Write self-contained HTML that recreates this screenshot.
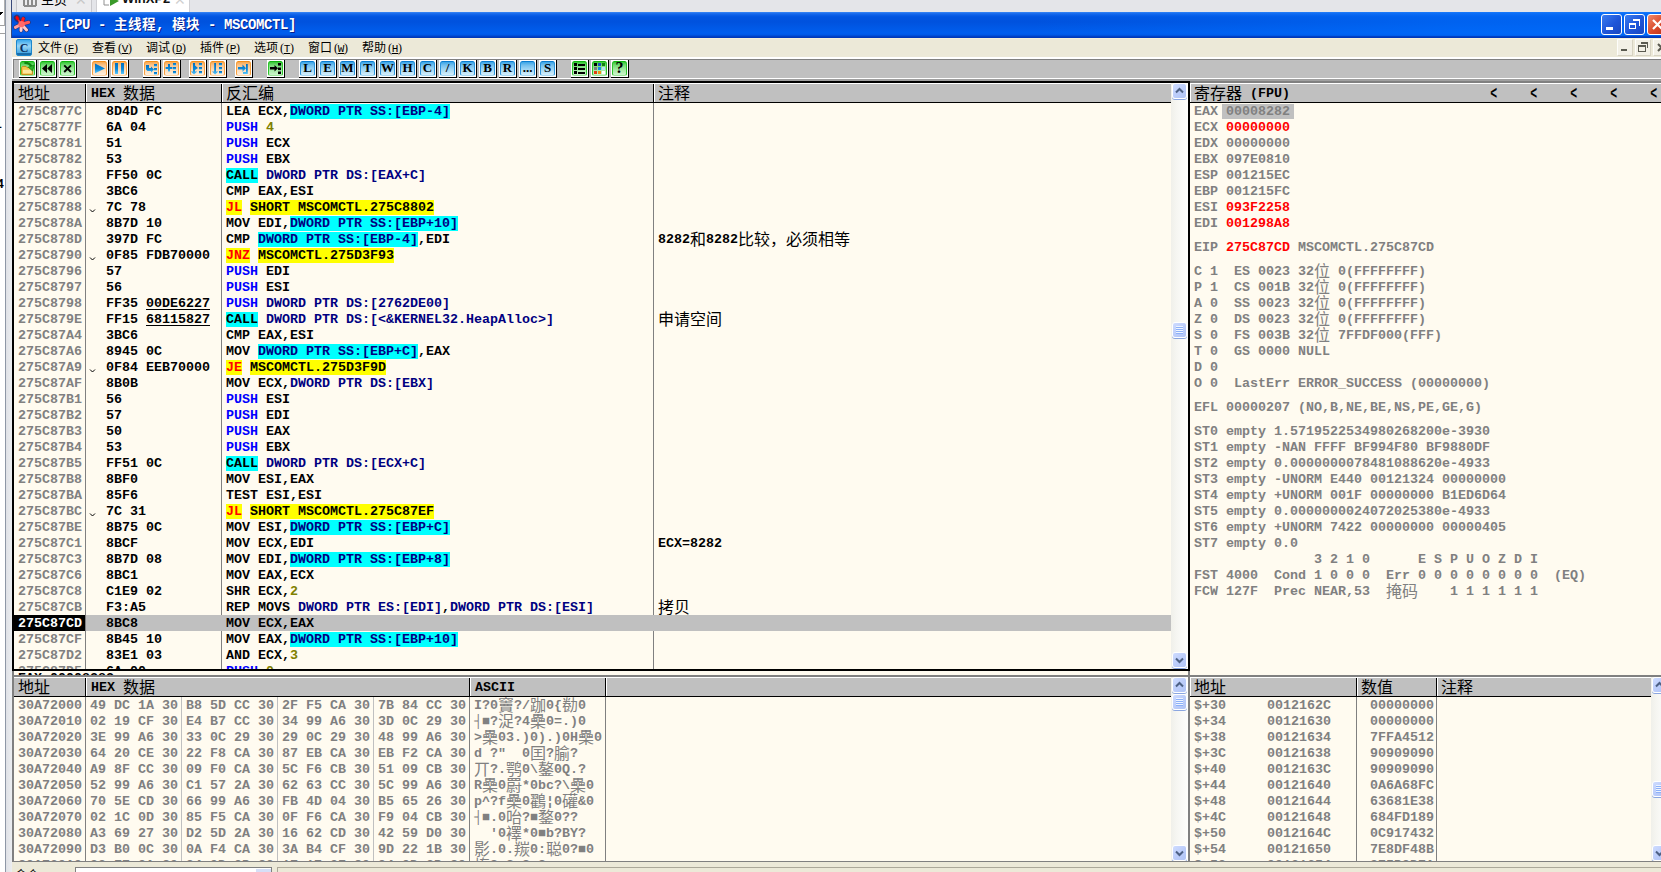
<!DOCTYPE html>
<html lang="zh"><head><meta charset="utf-8"><title>OllyDbg - CPU</title>
<style>
*{box-sizing:border-box;margin:0;padding:0}
html,body{width:1661px;height:872px;overflow:hidden;background:#ece9d8}
body{position:relative;font-family:"Liberation Sans","Noto Sans CJK SC",sans-serif}
.a{position:absolute}
.m{font:bold 13.333px/16px "Liberation Mono","Noto Sans CJK SC",monospace;white-space:pre;height:16px;letter-spacing:0}
.cj{font-family:"Noto Sans CJK SC",sans-serif;font-weight:400;font-size:16px;letter-spacing:0;line-height:0;position:relative;top:2px}
.g{color:#808080}
.r{color:#ff0000}
.bl{color:#0000ff}
.nv{color:#000080}
.ol{color:#808000}
.cy{background:#00ffff;color:#000080}
.cc{background:#00ffff;color:#000}
.yj{background:#ffff00;color:#ff0000}
.yy{background:#ffff00;color:#000}
.u{text-decoration:underline;text-underline-offset:2px}
.pane{background:#fffbf0;overflow:hidden}
.hd{background:#c0c0c0;height:19px;border-top:1px solid #fff}
.hc{position:absolute;top:0;height:18px;border-left:1px solid #000;box-shadow:inset 1px 0 0 #fff}
.ht{position:absolute;top:2px;left:5px;font:bold 13.333px/16px "Liberation Mono",monospace;white-space:pre}

.vl{position:absolute;width:1px;background:#808080}
.vl2{position:absolute;width:1px;background:#c0c0c0}
.sb{position:absolute;width:17px;background:linear-gradient(to right,#f0f0ea 0,#f6f6f2 35%,#fefefc 100%)}
.sbb{position:absolute;left:1px;width:15px;height:16px;border:1px solid #fff;border-radius:3px;background:linear-gradient(135deg,#cfdcff 0,#bccdfa 50%,#b0c4f6 100%);box-shadow:0 1px 0 #8ba6e0}
.tb{position:absolute;top:60px;width:18px;height:18px;background:#fff;border-right:1px solid #000;border-bottom:1px solid #000}
.ti{position:absolute;left:1px;top:1px;width:15px;height:15px;border-radius:2.5px}
.ti{border:1px solid}
.tg{background:linear-gradient(#34c634 0,#74dc74 25%,#a4eaa4 60%,#ccf5cc 100%);border-color:#10b410 #2cc42c #9ce69c #2cc42c}
.to{background:linear-gradient(#f8a850 0,#fbc48c 25%,#fcdcb8 60%,#fef0e0 100%);border-color:#f48e1c #f6a040 #fbd4a8 #f6a040}
.tc{background:linear-gradient(#3aa4e6 0,#74c0ee 25%,#a4d8f4 60%,#d4eefb 100%);border-color:#0a7cd0 #2a94dc #a8d8f2 #2a94dc}
.tl{position:absolute;left:0;top:0;width:15px;height:15px;text-align:center;font:bold 13px/13px "Liberation Serif",serif;color:#000}
.mi{position:absolute;top:40px;height:14px;font:12px/14px "Noto Sans CJK SC",sans-serif;color:#000;white-space:pre}
.mi i{font:normal 12px/14px "Liberation Serif",serif;display:inline-block;width:6px;text-align:center}
</style></head>
<body>
<div class="a" style="left:0;top:0;width:1661px;height:12px;background:#e4e5e9"></div>
<div class="a" style="left:0;top:0;width:5px;height:872px;background:#fff"></div>
<div class="a" style="left:5px;top:0;width:1px;height:872px;background:#8e97a6"></div>
<div class="a" style="left:6px;top:0;width:6px;height:872px;background:linear-gradient(to right,#dfe1e6,#eceef1)"></div>
<div class="a" style="left:0;top:0;width:5px;height:26px;border-bottom:1px solid #a0a0a0;border-right:1px solid #b0b0b0"></div>
<div class="a" style="left:0;top:33px;width:5px;height:1px;background:#a0a0a0"></div>
<div class="a" style="left:0;top:12px;width:3px;height:1px;background:#000"></div><div class="a" style="left:0;top:13px;width:2px;height:1px;background:#000"></div><div class="a" style="left:0;top:14px;width:1px;height:1px;background:#000"></div>
<div class="a" style="left:-5px;top:118px;font:bold 12px/12px 'Liberation Sans',sans-serif;color:#000">1</div>
<div class="a" style="left:-3px;top:178px;font:bold 12px/12px 'Liberation Sans',sans-serif;color:#000">4</div>
<div class="a" style="left:16px;top:0;width:76px;height:12px;background:#ececee;border-left:1px solid #c8c8cc;border-right:1px solid #c8c8cc;overflow:hidden"><svg class="a" style="left:6px;top:-5px" width="14" height="12" viewBox="0 0 14 12"><path d="M1 11V2h4v9M9 11V2h4v9M1 11h12" fill="none" stroke="#8a8a8a" stroke-width="2"/></svg><span class="a" style="left:24px;top:-9px;font:400 13px/16px 'Noto Sans CJK SC',sans-serif;color:#000">主页</span><span class="a" style="left:58px;top:-8px;font:14px/16px 'Liberation Sans',sans-serif;color:#c8c8c8">&#10005;</span></div>
<div class="a" style="left:96px;top:0;width:94px;height:12px;background:#fff;border-left:1px solid #d0d0d4;border-right:1px solid #d0d0d4;overflow:hidden"><svg class="a" style="left:6px;top:-6px" width="18" height="14" viewBox="0 0 18 14"><path d="M1 4v7h5" fill="none" stroke="#909090" stroke-width="1"/><path d="M7 2l9 5-9 5z" fill="#3a9a2a"/></svg><span class="a" style="left:25px;top:-9px;font:bold 13px/16px 'Liberation Sans',sans-serif;color:#111">WinXP2</span><span class="a" style="left:77px;top:-8px;font:14px/16px 'Liberation Sans',sans-serif;color:#d0d0d0">&#10005;</span></div>
<div class="a" style="left:12px;top:12px;width:1649px;height:26px;background:linear-gradient(to bottom,#3d8cf6 0,#2272ee 1px,#0a5fe8 3px,#0054e0 5px,#0052de 10px,#0059e7 16px,#005eee 21px,#0058e6 23px,#0046cc 24px,#0034b4 26px)"></div>
<div class="a" style="left:12px;top:12px;width:1649px;height:24px;background:linear-gradient(to right,rgba(0,110,255,0) 0,rgba(0,110,255,0) 62%,rgba(0,112,255,.55) 88%,rgba(0,112,255,.6) 100%)"></div>
<div class="a" style="left:11px;top:0;width:1px;height:38px;background:#3a4a7a"></div>
<svg class="a" style="left:13px;top:14px" width="19" height="20" viewBox="13 14 19 20"><defs><linearGradient id="sp" x1="0" y1="0" x2="0" y2="1"><stop offset="0" stop-color="#ff0000"/><stop offset=".3" stop-color="#ff3030"/><stop offset=".6" stop-color="#ff8080"/><stop offset="1" stop-color="#fff0f0"/></linearGradient></defs><g fill="none" stroke="#5a1010" stroke-linecap="round" stroke-width="4.2" opacity=".55"><path d="M21.4 24.2L23.3 18.6M21.4 24.2L28.6 22.3M21.4 24.2L15.4 27.4M21.4 24.2L21 30.4M21.4 24.2L26.6 30M21.4 24.2L18.4 20"/><ellipse cx="17.2" cy="18.2" rx="1" ry="1.6" transform="rotate(-35 17.2 18.2)"/></g><g fill="none" stroke="url(#sp)" stroke-linecap="round" stroke-width="3" gradientUnits="userSpaceOnUse"><path d="M21.4 24.2L23.3 18.6" stroke="#ff1818"/><path d="M21.4 24.2L28.6 22.3" stroke="#ff5a5a"/><path d="M21.4 24.2L15.4 27.4" stroke="#ffa0a0"/><path d="M21.4 24.2L21 30.4" stroke="#ffd0d0"/><path d="M21.4 24.2L26.6 30" stroke="#ffc8c8"/><path d="M21.4 24.2L18.4 20" stroke="#ff3030" stroke-width="1.6"/></g><ellipse cx="17.2" cy="18.2" rx="1.5" ry="2.2" transform="rotate(-35 17.2 18.2)" fill="#ff0000"/><circle cx="21.4" cy="24.2" r="3.1" fill="#ff6a6a"/></svg>
<div class="a" style="left:42px;top:14px;height:18px;white-space:pre;color:#fff;font:bold 14px/18px 'Liberation Mono',monospace;letter-spacing:-0.4px;text-shadow:1px 1px 0 #0a1f8a">- [CPU - <span style="font:bold 13.5px/18px 'Noto Sans CJK SC',sans-serif;letter-spacing:0.5px">主线程</span>, <span style="font:bold 13.5px/18px 'Noto Sans CJK SC',sans-serif;letter-spacing:0.5px">模块</span> - MSCOMCTL]</div>
<div class="a" style="left:1601px;top:14px;width:21px;height:21px;border:1px solid #fff;border-radius:3px;background:linear-gradient(135deg,#3a7cf0 0,#1e55d8 55%,#1a48c0 100%)"><div class="a" style="left:4px;top:12px;width:7px;height:3px;background:#fff"></div></div>
<div class="a" style="left:1624px;top:14px;width:21px;height:21px;border:1px solid #fff;border-radius:3px;background:linear-gradient(135deg,#3a7cf0 0,#1e55d8 55%,#1a48c0 100%)"><div class="a" style="left:8px;top:4px;width:7px;height:7px;border-right:1px solid #fff;border-top:2px solid #fff"></div><div class="a" style="left:4px;top:8px;width:7px;height:6px;border:1px solid #fff;border-top:2px solid #fff"></div></div>
<div class="a" style="left:1647px;top:14px;width:21px;height:21px;border:1px solid #fff;border-radius:3px;background:linear-gradient(135deg,#f08a6a 0,#d8482a 55%,#b83018 100%)"><svg class="a" style="left:3px;top:3px" width="13" height="13" viewBox="0 0 13 13"><path d="M2 2l9 9M11 2l-9 9" stroke="#fff" stroke-width="2.2"/></svg></div>
<div class="a" style="left:12px;top:38px;width:1649px;height:19px;background:#ece9d8;border-top:1px solid #f5f0d8"></div>
<div class="a" style="left:12px;top:57px;width:1649px;height:2px;background:#fff"></div>
<div class="a" style="left:12px;top:59px;width:1649px;height:1px;background:#808080"></div>
<div class="a" style="left:16px;top:39px;width:16px;height:17px;border-radius:2px;background:linear-gradient(#3aa8ec 0,#9ad6f6 40%,#4aaae4 85%,#1a6ca8 86%,#1a6ca8 100%);border:1px solid #1c86cc"><span class="a" style="left:0;top:1px;width:14px;text-align:center;font:bold 12px/14px 'Liberation Serif',serif;color:#0c2c5c">C</span></div>
<div class="mi" style="left:38px">文件<i style="text-align:right">(</i><i style="font:normal 11px/14px 'Liberation Mono',monospace;text-indent:-0.3px"><u>F</u></i><i style="text-align:left">)</i></div>
<div class="mi" style="left:92px">查看<i style="text-align:right">(</i><i style="font:normal 11px/14px 'Liberation Mono',monospace;text-indent:-0.3px"><u>V</u></i><i style="text-align:left">)</i></div>
<div class="mi" style="left:146px">调试<i style="text-align:right">(</i><i style="font:normal 11px/14px 'Liberation Mono',monospace;text-indent:-0.3px"><u>D</u></i><i style="text-align:left">)</i></div>
<div class="mi" style="left:200px">插件<i style="text-align:right">(</i><i style="font:normal 11px/14px 'Liberation Mono',monospace;text-indent:-0.3px"><u>P</u></i><i style="text-align:left">)</i></div>
<div class="mi" style="left:254px">选项<i style="text-align:right">(</i><i style="font:normal 11px/14px 'Liberation Mono',monospace;text-indent:-0.3px"><u>T</u></i><i style="text-align:left">)</i></div>
<div class="mi" style="left:308px">窗口<i style="text-align:right">(</i><i style="font:normal 11px/14px 'Liberation Mono',monospace;text-indent:-0.3px"><u>W</u></i><i style="text-align:left">)</i></div>
<div class="mi" style="left:362px">帮助<i style="text-align:right">(</i><i style="font:normal 11px/14px 'Liberation Mono',monospace;text-indent:-0.3px"><u>H</u></i><i style="text-align:left">)</i></div>
<div class="a" style="left:1617px;top:39px;width:16px;height:17px;background:#f2f0e6;border:1px solid #fdfdfa;border-right-color:#d6d2c2;border-bottom-color:#d6d2c2"><div class="a" style="left:3px;top:9px;width:6px;height:2px;background:#5a5a50"></div></div>
<div class="a" style="left:1635px;top:39px;width:16px;height:17px;background:#f2f0e6;border:1px solid #fdfdfa;border-right-color:#d6d2c2;border-bottom-color:#d6d2c2"><div class="a" style="left:5px;top:2px;width:7px;height:6px;border-right:1px solid #5a5a50;border-top:2px solid #5a5a50"></div><div class="a" style="left:2px;top:5px;width:8px;height:7px;border:1px solid #5a5a50;border-top-width:2px;background:#f2f0e6"></div></div>
<div class="a" style="left:1653px;top:39px;width:16px;height:17px;background:#f2f0e6;border:1px solid #fdfdfa;border-right-color:#d6d2c2;border-bottom-color:#d6d2c2"><svg class="a" style="left:3px;top:3px" width="9" height="9" viewBox="0 0 9 9"><path d="M1 1l7 7M8 1l-7 7" stroke="#5a5a50" stroke-width="2"/></svg></div>
<div class="a" style="left:12px;top:60px;width:1649px;height:18px;background:#c0c0c0"></div>
<div class="a" style="left:12px;top:78px;width:1649px;height:1px;background:#fff"></div>
<div class="a" style="left:12px;top:79px;width:1649px;height:2px;background:#a0a0a0"></div>
<div class="a" style="left:12px;top:59px;width:1px;height:20px;background:#fff"></div>
<div class="a" style="left:13px;top:59px;width:1px;height:19px;background:#808080"></div>
<svg width="0" height="0" style="position:absolute"><defs><linearGradient id="bg" x1="0" y1="0" x2="0" y2="1"><stop offset="0" stop-color="#0070c0"/><stop offset=".55" stop-color="#0a86d8"/><stop offset="1" stop-color="#5cc8fa"/></linearGradient></defs></svg>
<div class="tb" style="left:19px"><div class="ti tg"></div><svg class="a" style="left:1px;top:1px" width="15" height="15" viewBox="0 0 15 15"><path d="M1.6 7c0-1 .5-1.6 1.5-1.6H6l1 1.2h3.2l1.2 1.2h1.2V13.4H1.6z" fill="#f4c84c" stroke="#c48a14" stroke-width="1"/><path d="M3 8.8h8.6v3.6H3z" fill="#fbe6a0"/><path d="M4.4 1.8c3.4-.2 6 1.4 7.2 4" fill="none" stroke="#0f860f" stroke-width="2.2"/><path d="M8.4 6.2l5.8-2.2-1.6 6z" fill="#2fb42f" stroke="#0f860f" stroke-width=".8"/></svg></div>
<div class="tb" style="left:39px"><div class="ti tg"></div><svg class="a" style="left:1px;top:1px" width="15" height="15" viewBox="0 0 15 15"><path d="M7 3v9L2 7.5zM12 3v9L7.2 7.5z" fill="#000"/></svg></div>
<div class="tb" style="left:59px"><div class="ti tg"></div><svg class="a" style="left:1px;top:1px" width="15" height="15" viewBox="0 0 15 15"><path d="M4.2 4.4l6.8 6.6M11 4.4l-6.8 6.6" stroke="#000" stroke-width="1.9"/></svg></div>
<div class="tb" style="left:91px"><div class="ti to"></div><svg class="a" style="left:1px;top:1px" width="15" height="15" viewBox="0 0 15 15"><path d="M3 2.6L13 7.4 3 12.2z" fill="url(#bg)"/></svg></div>
<div class="tb" style="left:111px"><div class="ti to"></div><svg class="a" style="left:1px;top:1px" width="15" height="15" viewBox="0 0 15 15"><path d="M3 2h3v11H3zM9 2h3v11H9z" fill="url(#bg)"/></svg></div>
<div class="tb" style="left:143px"><div class="ti to"></div><svg class="a" style="left:1px;top:1px" width="15" height="15" viewBox="0 0 15 15"><rect x="10" y="3" width="3" height="2.5" fill="url(#bg)"/><rect x="10" y="7" width="3" height="2.5" fill="url(#bg)"/><rect x="10" y="11" width="3" height="2.5" fill="url(#bg)"/><path d="M2 4h3v3h2V5.4L10 8.6 7 11.8V10H3.5L2 8.5z" fill="url(#bg)"/></svg></div>
<div class="tb" style="left:163px"><div class="ti to"></div><svg class="a" style="left:1px;top:1px" width="15" height="15" viewBox="0 0 15 15"><rect x="9" y="2" width="3" height="2.5" fill="url(#bg)"/><rect x="9" y="6" width="3" height="2.5" fill="url(#bg)"/><rect x="9" y="10" width="3" height="2.5" fill="url(#bg)"/><path d="M4 3h2v3h2.4v2H6v2L5 11 4 10V8H1.6V6H4z" fill="url(#bg)"/></svg></div>
<div class="tb" style="left:189px"><div class="ti to"></div><svg class="a" style="left:1px;top:1px" width="15" height="15" viewBox="0 0 15 15"><rect x="9" y="2" width="3" height="2.5" fill="url(#bg)"/><rect x="9" y="6" width="3" height="2.5" fill="url(#bg)"/><rect x="9" y="10" width="3" height="2.5" fill="url(#bg)"/><path d="M3 2h2v2.5l3 2.5-3 2v1.5h2.2L4 13.6.8 10.5H3z" fill="url(#bg)"/></svg></div>
<div class="tb" style="left:209px"><div class="ti to"></div><svg class="a" style="left:1px;top:1px" width="15" height="15" viewBox="0 0 15 15"><rect x="9" y="2" width="3" height="2.5" fill="url(#bg)"/><rect x="9" y="6" width="3" height="2.5" fill="url(#bg)"/><rect x="9" y="10" width="3" height="2.5" fill="url(#bg)"/><path d="M4.2 2h1.8v8.5h2.2L5.1 13.6 2 10.5h2.2z" fill="url(#bg)"/></svg></div>
<div class="tb" style="left:235px"><div class="ti to"></div><svg class="a" style="left:1px;top:1px" width="15" height="15" viewBox="0 0 15 15"><path d="M2 6h4.5V3.5L10 7.2 6.5 11V8.5H2z" fill="url(#bg)"/><path d="M10 3h1.8v10H7v-2h3z" fill="url(#bg)"/></svg></div>
<div class="tb" style="left:267px"><div class="ti tg"></div><svg class="a" style="left:1px;top:1px" width="15" height="15" viewBox="0 0 15 15"><path d="M2 6h4.5V4L10 7.3 6.5 10.6V8.6H2z" fill="#000"/><rect x="10" y="2" width="3" height="2.6" fill="#000"/><rect x="10" y="6.5" width="3" height="2.6" fill="#000"/><rect x="10" y="10.5" width="3" height="2.6" fill="#000"/></svg></div>
<div class="tb" style="left:299px"><div class="ti tc"></div><div class="tl" style="left:1px;top:1px">L</div></div>
<div class="tb" style="left:319px"><div class="ti tc"></div><div class="tl" style="left:1px;top:1px">E</div></div>
<div class="tb" style="left:339px"><div class="ti tc"></div><div class="tl" style="left:1px;top:1px">M</div></div>
<div class="tb" style="left:359px"><div class="ti tc"></div><div class="tl" style="left:1px;top:1px">T</div></div>
<div class="tb" style="left:379px"><div class="ti tc"></div><div class="tl" style="left:1px;top:1px">W</div></div>
<div class="tb" style="left:399px"><div class="ti tc"></div><div class="tl" style="left:1px;top:1px">H</div></div>
<div class="tb" style="left:419px"><div class="ti tc"></div><div class="tl" style="left:1px;top:1px">C</div></div>
<div class="tb" style="left:439px"><div class="ti tc"></div><div class="tl" style="left:1px;top:1px">/</div></div>
<div class="tb" style="left:459px"><div class="ti tc"></div><div class="tl" style="left:1px;top:1px">K</div></div>
<div class="tb" style="left:479px"><div class="ti tc"></div><div class="tl" style="left:1px;top:1px">B</div></div>
<div class="tb" style="left:499px"><div class="ti tc"></div><div class="tl" style="left:1px;top:1px">R</div></div>
<div class="tb" style="left:519px"><div class="ti tc"></div><div class="tl" style="left:1px;top:1px">...</div></div>
<div class="tb" style="left:539px"><div class="ti tc"></div><div class="tl" style="left:1px;top:1px">S</div></div>
<div class="tb" style="left:571px"><div class="ti tg"></div><svg class="a" style="left:1px;top:1px" width="15" height="15" viewBox="0 0 15 15"><path d="M2 2h3v3H2zM2 6h3v3H2zM2 10h3v3H2z" fill="#000"/><path d="M6 3h7v2H6zM6 7h7v2H6zM6 11h7v2H6z" fill="#000"/></svg></div>
<div class="tb" style="left:591px"><div class="ti tg"></div><svg class="a" style="left:1px;top:1px" width="15" height="15" viewBox="0 0 15 15"><rect x="2" y="2" width="3" height="3" fill="#000"/><rect x="6" y="2" width="3" height="3" fill="#1850c0"/><rect x="10" y="2" width="3" height="3" fill="#108010"/><rect x="2" y="6" width="3" height="3" fill="#808080"/><rect x="6" y="6" width="3" height="3" fill="#1090e0"/><rect x="10" y="6" width="3" height="3" fill="#b0e0f8"/><rect x="2" y="10" width="3" height="3" fill="#e04010"/><rect x="6" y="10" width="3" height="3" fill="#f09010"/><rect x="10" y="10" width="3" height="3" fill="#fff"/></svg></div>
<div class="tb" style="left:611px"><div class="ti tg"></div><div class="tl" style="left:1px;top:0px;font:bold 16px/16px 'Liberation Serif',serif">?</div></div>
<div class="a" style="left:12px;top:81px;width:1178px;height:590px;background:#000"></div>
<div class="a pane" id="dis" style="left:14px;top:83px;width:1174px;height:586px">
<div class="a hd" style="left:0;top:0;width:1157px"></div>
<div class="a" style="left:0;top:19px;width:1157px;height:1px;background:#000"></div>
<div class="hc" style="left:0px;width:71px;top:1px;border-left:none;box-shadow:none;"><span class="ht" style="left:4px"><span class="cj">地址</span></span></div>
<div class="hc" style="left:71px;width:136px;top:1px;"><span class="ht" style="left:5px">HEX <span class="cj">数据</span></span></div>
<div class="hc" style="left:207px;width:432px;top:1px;"><span class="ht" style="left:4px"><span class="cj">反汇编</span></span></div>
<div class="hc" style="left:639px;width:518px;top:1px;"><span class="ht" style="left:4px"><span class="cj">注释</span></span></div>
<div class="vl" style="left:71px;top:20px;height:566px"></div>
<div class="vl" style="left:207px;top:20px;height:566px"></div>
<div class="vl" style="left:639px;top:20px;height:566px"></div>
<div class="a m g" style="left:4px;top:21px">275C877C</div>
<div class="a m" style="left:92px;top:21px">8D4D FC</div>
<div class="a m" style="left:212px;top:21px">LEA ECX,<span class="cy">DWORD PTR SS:[EBP-4]</span></div>
<div class="a m g" style="left:4px;top:37px">275C877F</div>
<div class="a m" style="left:92px;top:37px">6A 04</div>
<div class="a m" style="left:212px;top:37px"><span class="bl">PUSH</span> <span class="ol">4</span></div>
<div class="a m g" style="left:4px;top:53px">275C8781</div>
<div class="a m" style="left:92px;top:53px">51</div>
<div class="a m" style="left:212px;top:53px"><span class="bl">PUSH</span> ECX</div>
<div class="a m g" style="left:4px;top:69px">275C8782</div>
<div class="a m" style="left:92px;top:69px">53</div>
<div class="a m" style="left:212px;top:69px"><span class="bl">PUSH</span> EBX</div>
<div class="a m g" style="left:4px;top:85px">275C8783</div>
<div class="a m" style="left:92px;top:85px">FF50 0C</div>
<div class="a m" style="left:212px;top:85px"><span class="cc">CALL</span> <span class="nv">DWORD PTR DS:[EAX+C]</span></div>
<div class="a m g" style="left:4px;top:101px">275C8786</div>
<div class="a m" style="left:92px;top:101px">3BC6</div>
<div class="a m" style="left:212px;top:101px">CMP EAX,ESI</div>
<div class="a m g" style="left:4px;top:117px">275C8788</div>
<svg class="a" style="left:75px;top:126px" width="7" height="5" viewBox="0 0 7 5"><path d="M1 .5l2.5 2.5L6 .5" fill="none" stroke="#000" stroke-width="1"/></svg>
<div class="a m" style="left:92px;top:117px">7C 78</div>
<div class="a m" style="left:212px;top:117px"><span class="yj">JL</span> <span class="yy">SHORT MSCOMCTL.275C8802</span></div>
<div class="a m g" style="left:4px;top:133px">275C878A</div>
<div class="a m" style="left:92px;top:133px">8B7D 10</div>
<div class="a m" style="left:212px;top:133px">MOV EDI,<span class="cy">DWORD PTR SS:[EBP+10]</span></div>
<div class="a m g" style="left:4px;top:149px">275C878D</div>
<div class="a m" style="left:92px;top:149px">397D FC</div>
<div class="a m" style="left:212px;top:149px">CMP <span class="cy">DWORD PTR SS:[EBP-4]</span>,EDI</div>
<div class="a m" style="left:644px;top:149px">8282<span class="cj">和</span>8282<span class="cj">比较，必须相等</span></div>
<div class="a m g" style="left:4px;top:165px">275C8790</div>
<svg class="a" style="left:75px;top:174px" width="7" height="5" viewBox="0 0 7 5"><path d="M1 .5l2.5 2.5L6 .5" fill="none" stroke="#000" stroke-width="1"/></svg>
<div class="a m" style="left:92px;top:165px">0F85 FDB70000</div>
<div class="a m" style="left:212px;top:165px"><span class="yj">JNZ</span> <span class="yy">MSCOMCTL.275D3F93</span></div>
<div class="a m g" style="left:4px;top:181px">275C8796</div>
<div class="a m" style="left:92px;top:181px">57</div>
<div class="a m" style="left:212px;top:181px"><span class="bl">PUSH</span> EDI</div>
<div class="a m g" style="left:4px;top:197px">275C8797</div>
<div class="a m" style="left:92px;top:197px">56</div>
<div class="a m" style="left:212px;top:197px"><span class="bl">PUSH</span> ESI</div>
<div class="a m g" style="left:4px;top:213px">275C8798</div>
<div class="a m" style="left:92px;top:213px">FF35 <span class="u">00DE6227</span></div>
<div class="a m" style="left:212px;top:213px"><span class="bl">PUSH</span> <span class="nv">DWORD PTR DS:[2762DE00]</span></div>
<div class="a m g" style="left:4px;top:229px">275C879E</div>
<div class="a m" style="left:92px;top:229px">FF15 <span class="u">68115827</span></div>
<div class="a m" style="left:212px;top:229px"><span class="cc">CALL</span> <span class="nv">DWORD PTR DS:[&lt;&amp;KERNEL32.HeapAlloc&gt;]</span></div>
<div class="a m" style="left:644px;top:229px"><span class="cj">申请空间</span></div>
<div class="a m g" style="left:4px;top:245px">275C87A4</div>
<div class="a m" style="left:92px;top:245px">3BC6</div>
<div class="a m" style="left:212px;top:245px">CMP EAX,ESI</div>
<div class="a m g" style="left:4px;top:261px">275C87A6</div>
<div class="a m" style="left:92px;top:261px">8945 0C</div>
<div class="a m" style="left:212px;top:261px">MOV <span class="cy">DWORD PTR SS:[EBP+C]</span>,EAX</div>
<div class="a m g" style="left:4px;top:277px">275C87A9</div>
<svg class="a" style="left:75px;top:286px" width="7" height="5" viewBox="0 0 7 5"><path d="M1 .5l2.5 2.5L6 .5" fill="none" stroke="#000" stroke-width="1"/></svg>
<div class="a m" style="left:92px;top:277px">0F84 EEB70000</div>
<div class="a m" style="left:212px;top:277px"><span class="yj">JE</span> <span class="yy">MSCOMCTL.275D3F9D</span></div>
<div class="a m g" style="left:4px;top:293px">275C87AF</div>
<div class="a m" style="left:92px;top:293px">8B0B</div>
<div class="a m" style="left:212px;top:293px">MOV ECX,<span class="nv">DWORD PTR DS:[EBX]</span></div>
<div class="a m g" style="left:4px;top:309px">275C87B1</div>
<div class="a m" style="left:92px;top:309px">56</div>
<div class="a m" style="left:212px;top:309px"><span class="bl">PUSH</span> ESI</div>
<div class="a m g" style="left:4px;top:325px">275C87B2</div>
<div class="a m" style="left:92px;top:325px">57</div>
<div class="a m" style="left:212px;top:325px"><span class="bl">PUSH</span> EDI</div>
<div class="a m g" style="left:4px;top:341px">275C87B3</div>
<div class="a m" style="left:92px;top:341px">50</div>
<div class="a m" style="left:212px;top:341px"><span class="bl">PUSH</span> EAX</div>
<div class="a m g" style="left:4px;top:357px">275C87B4</div>
<div class="a m" style="left:92px;top:357px">53</div>
<div class="a m" style="left:212px;top:357px"><span class="bl">PUSH</span> EBX</div>
<div class="a m g" style="left:4px;top:373px">275C87B5</div>
<div class="a m" style="left:92px;top:373px">FF51 0C</div>
<div class="a m" style="left:212px;top:373px"><span class="cc">CALL</span> <span class="nv">DWORD PTR DS:[ECX+C]</span></div>
<div class="a m g" style="left:4px;top:389px">275C87B8</div>
<div class="a m" style="left:92px;top:389px">8BF0</div>
<div class="a m" style="left:212px;top:389px">MOV ESI,EAX</div>
<div class="a m g" style="left:4px;top:405px">275C87BA</div>
<div class="a m" style="left:92px;top:405px">85F6</div>
<div class="a m" style="left:212px;top:405px">TEST ESI,ESI</div>
<div class="a m g" style="left:4px;top:421px">275C87BC</div>
<svg class="a" style="left:75px;top:430px" width="7" height="5" viewBox="0 0 7 5"><path d="M1 .5l2.5 2.5L6 .5" fill="none" stroke="#000" stroke-width="1"/></svg>
<div class="a m" style="left:92px;top:421px">7C 31</div>
<div class="a m" style="left:212px;top:421px"><span class="yj">JL</span> <span class="yy">SHORT MSCOMCTL.275C87EF</span></div>
<div class="a m g" style="left:4px;top:437px">275C87BE</div>
<div class="a m" style="left:92px;top:437px">8B75 0C</div>
<div class="a m" style="left:212px;top:437px">MOV ESI,<span class="cy">DWORD PTR SS:[EBP+C]</span></div>
<div class="a m g" style="left:4px;top:453px">275C87C1</div>
<div class="a m" style="left:92px;top:453px">8BCF</div>
<div class="a m" style="left:212px;top:453px">MOV ECX,EDI</div>
<div class="a m" style="left:644px;top:453px">ECX=8282</div>
<div class="a m g" style="left:4px;top:469px">275C87C3</div>
<div class="a m" style="left:92px;top:469px">8B7D 08</div>
<div class="a m" style="left:212px;top:469px">MOV EDI,<span class="cy">DWORD PTR SS:[EBP+8]</span></div>
<div class="a m g" style="left:4px;top:485px">275C87C6</div>
<div class="a m" style="left:92px;top:485px">8BC1</div>
<div class="a m" style="left:212px;top:485px">MOV EAX,ECX</div>
<div class="a m g" style="left:4px;top:501px">275C87C8</div>
<div class="a m" style="left:92px;top:501px">C1E9 02</div>
<div class="a m" style="left:212px;top:501px">SHR ECX,<span class="ol">2</span></div>
<div class="a m g" style="left:4px;top:517px">275C87CB</div>
<div class="a m" style="left:92px;top:517px">F3:A5</div>
<div class="a m" style="left:212px;top:517px">REP MOVS <span class="nv">DWORD PTR ES:[EDI]</span>,<span class="nv">DWORD PTR DS:[ESI]</span></div>
<div class="a m" style="left:644px;top:517px"><span class="cj">拷贝</span></div>
<div class="a" style="left:0;top:532px;width:71px;height:16px;background:#000"></div>
<div class="a" style="left:72px;top:532px;width:1085px;height:16px;background:#c0c0c0"></div>
<div class="a m" style="left:4px;top:533px;color:#fff">275C87CD</div>
<div class="a m" style="left:92px;top:533px">8BC8</div>
<div class="a m" style="left:212px;top:533px">MOV ECX,EAX</div>
<div class="a m g" style="left:4px;top:549px">275C87CF</div>
<div class="a m" style="left:92px;top:549px">8B45 10</div>
<div class="a m" style="left:212px;top:549px">MOV EAX,<span class="cy">DWORD PTR SS:[EBP+10]</span></div>
<div class="a m g" style="left:4px;top:565px">275C87D2</div>
<div class="a m" style="left:92px;top:565px">83E1 03</div>
<div class="a m" style="left:212px;top:565px">AND ECX,<span class="ol">3</span></div>
<div class="a m g" style="left:4px;top:581px">275C87D5</div>
<div class="a m" style="left:92px;top:581px">6A 00</div>
<div class="a m" style="left:212px;top:581px"><span class="bl">PUSH</span> <span class="ol">0</span></div>
<div class="sb" style="left:1157px;top:0;height:586px"></div>
<div class="sbb" style="left:1158px;top:0px"><svg class="a" style="left:2px;top:3px" width="9" height="7" viewBox="0 0 9 7"><path d="M1 5.5L4.5 2 8 5.5" fill="none" stroke="#4d6185" stroke-width="2"/></svg></div>
<div class="sbb" style="left:1158px;top:239px"><div class="a" style="left:3px;top:3px;width:7px;height:8px;background:repeating-linear-gradient(#eef4ff 0,#eef4ff 1px,#8cb0f8 1px,#8cb0f8 2px)"></div></div>
<div class="sbb" style="left:1158px;top:569px"><svg class="a" style="left:2px;top:4px" width="9" height="7" viewBox="0 0 9 7"><path d="M1 1.5L4.5 5 8 1.5" fill="none" stroke="#4d6185" stroke-width="2"/></svg></div>
</div>
<div class="a" style="left:1190px;top:81px;width:471px;height:2px;background:#808080"></div>
<div class="a pane" id="reg" style="left:1190px;top:83px;width:471px;height:592px">
<div class="a hd" style="left:0;top:0;width:471px;box-shadow:inset 1px 0 0 #fff"></div>
<div class="a" style="left:0;top:19px;width:471px;height:1px;background:#000"></div>
<div class="a ht" style="left:4px;top:3px"><span class="cj">寄存器</span> (FPU)</div>
<div class="a ht" style="left:299px;top:4px;font:bold 16px/16px 'Liberation Mono',monospace;transform:scale(.72,1.12);transform-origin:50% 50%">&lt;</div>
<div class="a ht" style="left:339px;top:4px;font:bold 16px/16px 'Liberation Mono',monospace;transform:scale(.72,1.12);transform-origin:50% 50%">&lt;</div>
<div class="a ht" style="left:379px;top:4px;font:bold 16px/16px 'Liberation Mono',monospace;transform:scale(.72,1.12);transform-origin:50% 50%">&lt;</div>
<div class="a ht" style="left:419px;top:4px;font:bold 16px/16px 'Liberation Mono',monospace;transform:scale(.72,1.12);transform-origin:50% 50%">&lt;</div>
<div class="a ht" style="left:459px;top:4px;font:bold 16px/16px 'Liberation Mono',monospace;transform:scale(.72,1.12);transform-origin:50% 50%">&lt;</div>
<div class="a m g" style="left:4px;top:21px">EAX <span style="background:#c0c0c0;padding:0 4px;margin:0 -4px">00008282</span></div>
<div class="a m g" style="left:4px;top:37px">ECX <span class="r">00000000</span></div>
<div class="a m g" style="left:4px;top:53px">EDX 00000000</div>
<div class="a m g" style="left:4px;top:69px">EBX 097E0810</div>
<div class="a m g" style="left:4px;top:85px">ESP 001215EC</div>
<div class="a m g" style="left:4px;top:101px">EBP 001215FC</div>
<div class="a m g" style="left:4px;top:117px">ESI <span class="r">093F2258</span></div>
<div class="a m g" style="left:4px;top:133px">EDI <span class="r">001298A8</span></div>
<div class="a m g" style="left:4px;top:157px">EIP <span class="r">275C87CD</span> MSCOMCTL.275C87CD</div>
<div class="a m g" style="left:4px;top:181px">C 1  ES 0023 32<span class="cj">位</span> 0(FFFFFFFF)</div>
<div class="a m g" style="left:4px;top:197px">P 1  CS 001B 32<span class="cj">位</span> 0(FFFFFFFF)</div>
<div class="a m g" style="left:4px;top:213px">A 0  SS 0023 32<span class="cj">位</span> 0(FFFFFFFF)</div>
<div class="a m g" style="left:4px;top:229px">Z 0  DS 0023 32<span class="cj">位</span> 0(FFFFFFFF)</div>
<div class="a m g" style="left:4px;top:245px">S 0  FS 003B 32<span class="cj">位</span> 7FFDF000(FFF)</div>
<div class="a m g" style="left:4px;top:261px">T 0  GS 0000 NULL</div>
<div class="a m g" style="left:4px;top:277px">D 0</div>
<div class="a m g" style="left:4px;top:293px">O 0  LastErr ERROR_SUCCESS (00000000)</div>
<div class="a m g" style="left:4px;top:317px">EFL 00000207 (NO,B,NE,BE,NS,PE,GE,G)</div>
<div class="a m g" style="left:4px;top:341px">ST0 empty 1.5719522534980268200e-3930</div>
<div class="a m g" style="left:4px;top:357px">ST1 empty -NAN FFFF BF994F80 BF9880DF</div>
<div class="a m g" style="left:4px;top:373px">ST2 empty 0.0000000078481088620e-4933</div>
<div class="a m g" style="left:4px;top:389px">ST3 empty -UNORM E440 00121324 00000000</div>
<div class="a m g" style="left:4px;top:405px">ST4 empty +UNORM 001F 00000000 B1ED6D64</div>
<div class="a m g" style="left:4px;top:421px">ST5 empty 0.0000000024072025380e-4933</div>
<div class="a m g" style="left:4px;top:437px">ST6 empty +UNORM 7422 00000000 00000405</div>
<div class="a m g" style="left:4px;top:453px">ST7 empty 0.0</div>
<div class="a m g" style="left:4px;top:469px">               3 2 1 0      E S P U O Z D I</div>
<div class="a m g" style="left:4px;top:485px">FST 4000  Cond 1 0 0 0  Err 0 0 0 0 0 0 0 0  (EQ)</div>
<div class="a m g" style="left:4px;top:501px">FCW 127F  Prec NEAR,53  <span class="cj">掩码</span>    1 1 1 1 1 1</div>
</div>
<div class="a" style="left:12px;top:671px;width:2px;height:191px;background:#808080"></div>
<div class="a pane" style="left:14px;top:671px;width:1174px;height:5px"><div class="a m" style="left:4px;top:0px">EAX=00008282</div></div>
<div class="a" style="left:12px;top:675px;width:1649px;height:2px;background:#808080"></div>
<div class="a" style="left:1188px;top:671px;width:2px;height:191px;background:#808080"></div>
<div class="a pane" id="dmp" style="left:14px;top:677px;width:1174px;height:184px">
<div class="a hd" style="left:0;top:0;width:1157px"></div>
<div class="a" style="left:0;top:19px;width:1157px;height:1px;background:#000"></div>
<div class="hc" style="left:0px;width:71px;top:1px;border-left:none;box-shadow:none;"><span class="ht" style="left:4px"><span class="cj">地址</span></span></div>
<div class="hc" style="left:71px;width:384px;top:1px;"><span class="ht" style="left:5px">HEX <span class="cj">数据</span></span></div>
<div class="hc" style="left:455px;width:136px;top:1px;"><span class="ht" style="left:5px">ASCII</span></div>
<div class="hc" style="left:591px;width:566px;top:1px;"><span class="ht" style="left:5px"></span></div>
<div class="vl" style="left:71px;top:20px;height:164px"></div>
<div class="vl" style="left:455px;top:20px;height:164px"></div>
<div class="vl" style="left:591px;top:20px;height:164px"></div>
<div class="vl2" style="left:167px;top:20px;height:164px"></div>
<div class="vl2" style="left:263px;top:20px;height:164px"></div>
<div class="vl2" style="left:359px;top:20px;height:164px"></div>
<div class="a m g" style="left:4px;top:21px">30A72000</div>
<div class="a m g" style="left:76px;top:21px">49 DC 1A 30 B8 5D CC 30 2F F5 CA 30 7B 84 CC 30</div>
<div class="a m g" style="left:460px;top:21px">I?0<span class="cj">竇</span>?/<span class="cj">跏</span>0{<span class="cj">勌</span>0</div>
<div class="a m g" style="left:4px;top:37px">30A72010</div>
<div class="a m g" style="left:76px;top:37px">02 19 CF 30 E4 B7 CC 30 34 99 A6 30 3D 0C 29 30</div>
<div class="a m g" style="left:460px;top:37px">┤■?<span class="cj">浞</span>?4<span class="cj">櫐</span>0=.)0</div>
<div class="a m g" style="left:4px;top:53px">30A72020</div>
<div class="a m g" style="left:76px;top:53px">3E 99 A6 30 33 0C 29 30 29 0C 29 30 48 99 A6 30</div>
<div class="a m g" style="left:460px;top:53px">&gt;<span class="cj">櫐</span>03.)0).)0H<span class="cj">櫐</span>0</div>
<div class="a m g" style="left:4px;top:69px">30A72030</div>
<div class="a m g" style="left:76px;top:69px">64 20 CE 30 22 F8 CA 30 87 EB CA 30 EB F2 CA 30</div>
<div class="a m g" style="left:460px;top:69px">d ?"  0<span class="cj">囯</span>?<span class="cj">腧</span>?</div>
<div class="a m g" style="left:4px;top:85px">30A72040</div>
<div class="a m g" style="left:76px;top:85px">A9 8F CC 30 09 F0 CA 30 5C F6 CB 30 51 09 CB 30</div>
<div class="a m g" style="left:460px;top:85px"><span class="cj">丌</span>?.<span class="cj">鹗</span>0\<span class="cj">鏊</span>0Q.?</div>
<div class="a m g" style="left:4px;top:101px">30A72050</div>
<div class="a m g" style="left:76px;top:101px">52 99 A6 30 C1 57 2A 30 62 63 CC 30 5C 99 A6 30</div>
<div class="a m g" style="left:460px;top:101px">R<span class="cj">櫐</span>0<span class="cj">罻</span>*0bc?\<span class="cj">櫐</span>0</div>
<div class="a m g" style="left:4px;top:117px">30A72060</div>
<div class="a m g" style="left:76px;top:117px">70 5E CD 30 66 99 A6 30 FB 4D 04 30 B5 65 26 30</div>
<div class="a m g" style="left:460px;top:117px">p^?f<span class="cj">櫐</span>0<span class="cj">鸐</span>¦0<span class="cj">礶</span>&amp;0</div>
<div class="a m g" style="left:4px;top:133px">30A72070</div>
<div class="a m g" style="left:76px;top:133px">02 1C 0D 30 85 F5 CA 30 0F F6 CA 30 F9 04 CB 30</div>
<div class="a m g" style="left:460px;top:133px">┤■.0<span class="cj">咍</span>?■<span class="cj">鍪</span>0??</div>
<div class="a m g" style="left:4px;top:149px">30A72080</div>
<div class="a m g" style="left:76px;top:149px">A3 69 27 30 D2 5D 2A 30 16 62 CD 30 42 59 D0 30</div>
<div class="a m g" style="left:460px;top:149px">  '0<span class="cj">襗</span>*0■b?BY?</div>
<div class="a m g" style="left:4px;top:165px">30A72090</div>
<div class="a m g" style="left:76px;top:165px">D3 B0 0C 30 0A F4 CA 30 3A B4 CF 30 9D 22 1B 30</div>
<div class="a m g" style="left:460px;top:165px"><span class="cj">影</span>.0.<span class="cj">羰</span>0:<span class="cj">聪</span>0?■0</div>
<div class="a m g" style="left:4px;top:181px">30A720A0</div>
<div class="a m g" style="left:76px;top:181px">88 F7 CA 30 94 0D CB 30 1E 17 CF 30 94 0D CB 30</div>
<div class="a m g" style="left:460px;top:181px"><span class="cj">堶</span>?.?.?.?</div>
<div class="sb" style="left:1157px;top:0;height:184px"></div>
<div class="sbb" style="left:1158px;top:0px"><svg class="a" style="left:2px;top:3px" width="9" height="7" viewBox="0 0 9 7"><path d="M1 5.5L4.5 2 8 5.5" fill="none" stroke="#4d6185" stroke-width="2"/></svg></div>
<div class="sbb" style="left:1158px;top:17px"><div class="a" style="left:3px;top:3px;width:7px;height:8px;background:repeating-linear-gradient(#eef4ff 0,#eef4ff 1px,#8cb0f8 1px,#8cb0f8 2px)"></div></div>
<div class="sbb" style="left:1158px;top:168px"><svg class="a" style="left:2px;top:4px" width="9" height="7" viewBox="0 0 9 7"><path d="M1 1.5L4.5 5 8 1.5" fill="none" stroke="#4d6185" stroke-width="2"/></svg></div>
</div>
<div class="a pane" id="stk" style="left:1190px;top:677px;width:471px;height:184px">
<div class="a hd" style="left:0;top:0;width:461px;box-shadow:inset 1px 0 0 #fff"></div>
<div class="a" style="left:0;top:19px;width:461px;height:1px;background:#000"></div>
<div class="hc" style="left:0px;width:166px;top:1px;border-left:none;box-shadow:none;"><span class="ht" style="left:4px"><span class="cj">地址</span></span></div>
<div class="hc" style="left:166px;width:80px;top:1px;"><span class="ht" style="left:4px"><span class="cj">数值</span></span></div>
<div class="hc" style="left:246px;width:215px;top:1px;"><span class="ht" style="left:4px"><span class="cj">注释</span></span></div>
<div class="vl" style="left:166px;top:20px;height:164px"></div>
<div class="vl" style="left:246px;top:20px;height:164px"></div>
<div class="a m g" style="left:4px;top:21px">$+30</div>
<div class="a m g" style="left:77px;top:21px">0012162C</div>
<div class="a m g" style="left:180px;top:21px">00000000</div>
<div class="a m g" style="left:4px;top:37px">$+34</div>
<div class="a m g" style="left:77px;top:37px">00121630</div>
<div class="a m g" style="left:180px;top:37px">00000000</div>
<div class="a m g" style="left:4px;top:53px">$+38</div>
<div class="a m g" style="left:77px;top:53px">00121634</div>
<div class="a m g" style="left:180px;top:53px">7FFA4512</div>
<div class="a m g" style="left:4px;top:69px">$+3C</div>
<div class="a m g" style="left:77px;top:69px">00121638</div>
<div class="a m g" style="left:180px;top:69px">90909090</div>
<div class="a m g" style="left:4px;top:85px">$+40</div>
<div class="a m g" style="left:77px;top:85px">0012163C</div>
<div class="a m g" style="left:180px;top:85px">90909090</div>
<div class="a m g" style="left:4px;top:101px">$+44</div>
<div class="a m g" style="left:77px;top:101px">00121640</div>
<div class="a m g" style="left:180px;top:101px">0A6A68FC</div>
<div class="a m g" style="left:4px;top:117px">$+48</div>
<div class="a m g" style="left:77px;top:117px">00121644</div>
<div class="a m g" style="left:180px;top:117px">63681E38</div>
<div class="a m g" style="left:4px;top:133px">$+4C</div>
<div class="a m g" style="left:77px;top:133px">00121648</div>
<div class="a m g" style="left:180px;top:133px">684FD189</div>
<div class="a m g" style="left:4px;top:149px">$+50</div>
<div class="a m g" style="left:77px;top:149px">0012164C</div>
<div class="a m g" style="left:180px;top:149px">0C917432</div>
<div class="a m g" style="left:4px;top:165px">$+54</div>
<div class="a m g" style="left:77px;top:165px">00121650</div>
<div class="a m g" style="left:180px;top:165px">7E8DF48B</div>
<div class="a m g" style="left:4px;top:181px">$+58</div>
<div class="a m g" style="left:77px;top:181px">00121654</div>
<div class="a m g" style="left:180px;top:181px">875B9D7A</div>
<div class="sb" style="left:461px;top:0;height:184px"></div>
<div class="sbb" style="left:462px;top:0px"><svg class="a" style="left:2px;top:3px" width="9" height="7" viewBox="0 0 9 7"><path d="M1 5.5L4.5 2 8 5.5" fill="none" stroke="#4d6185" stroke-width="2"/></svg></div>
<div class="sbb" style="left:462px;top:104px"><div class="a" style="left:3px;top:3px;width:7px;height:8px;background:repeating-linear-gradient(#eef4ff 0,#eef4ff 1px,#8cb0f8 1px,#8cb0f8 2px)"></div></div>
<div class="sbb" style="left:462px;top:168px"><svg class="a" style="left:2px;top:4px" width="9" height="7" viewBox="0 0 9 7"><path d="M1 1.5L4.5 5 8 1.5" fill="none" stroke="#4d6185" stroke-width="2"/></svg></div>
</div>
<div class="a" style="left:12px;top:861px;width:1649px;height:1px;background:#808080"></div>
<div class="a" style="left:12px;top:862px;width:1649px;height:10px;background:#ece9d8"></div>
<div class="a" style="left:75px;top:867px;width:197px;height:8px;background:#fff;border:1px solid #808080"></div>
<div class="a" style="left:256px;top:869px;width:15px;height:6px;background:#d6dff7"></div>
<div class="a" style="left:277px;top:867px;width:1400px;height:8px;border:1px solid #aca899;border-color:#aca899 #fff #fff #aca899"></div>
<div class="a" style="left:15px;top:869px;font:12px/12px 'Noto Sans CJK SC',sans-serif;color:#000;white-space:pre">命令:</div>
</body></html>
